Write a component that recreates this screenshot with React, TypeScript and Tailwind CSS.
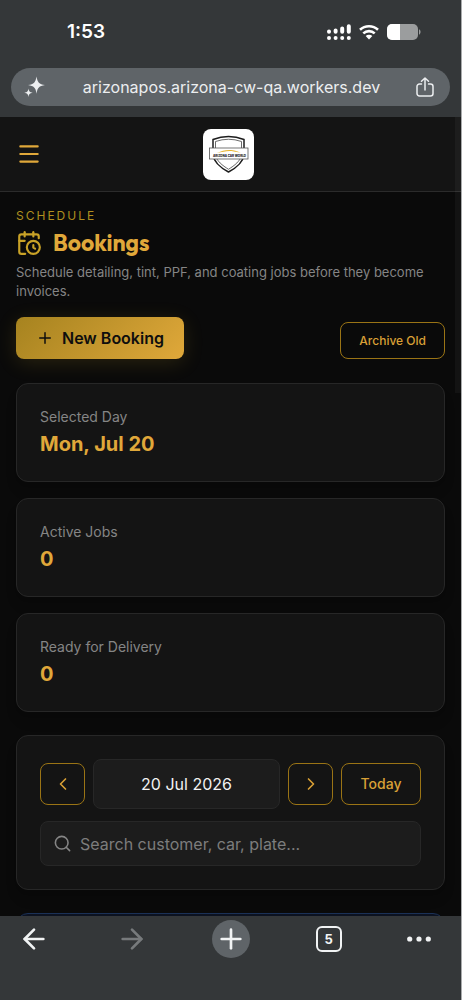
import React, { useState } from 'react'
import {
  ArrowLeft,
  ArrowRight,
  CalendarClock,
  ChevronLeft,
  ChevronRight,
  Menu,
  Plus,
  Search
} from 'lucide-react'

interface StatCardProps {
  label: string
  value: string | number
}

const goldOutline = 'border border-[#9a7415] text-[#d9a036] rounded-lg hover:bg-[#d9a036]/10'

function StatusBar() {
  return (
    <div className="flex items-center justify-between h-16 pl-[67px] pr-10 text-white">
      <span className="text-[19px] leading-6 font-semibold">1:53</span>
      <div className="flex items-center gap-2">
        <svg className="w-6 h-4" viewBox="0 0 24 16" fill="none" stroke="currentColor" strokeWidth="4" strokeLinecap="round">
          <path d="M2 7.6v.2M8.6 6.4v1.4M15.2 4.4v3.4M21.8 2.2v5.6" />
          <path d="M2 14v0M8.6 14v0M15.2 14v0M21.8 14v0" />
        </svg>
        <svg className="w-5 h-4" viewBox="0 0 20 16" fill="none" stroke="currentColor" strokeWidth="2.6">
          <path d="M1 5.8a13 13 0 0 1 18 0" />
          <path d="M4.3 9.4a8.3 8.3 0 0 1 11.4 0" />
          <path d="M10 15.4 6.7 12.1a4.7 4.7 0 0 1 6.6 0z" fill="currentColor" stroke="none" />
        </svg>
        <svg className="w-[34px] h-4" viewBox="0 0 34 16">
          <rect width="31" height="16" rx="5" fill="#9b9d9e" />
          <path d="M5 0h8v16H5a5 5 0 0 1-5-5V5a5 5 0 0 1 5-5z" fill="#fff" />
          <path d="M32 5.3c2 .9 2 4.5 0 5.4z" fill="#9b9d9e" />
        </svg>
      </div>
    </div>
  )
}

function AddressBar() {
  return (
    <div className="px-[11px] pt-1">
      <div className="flex items-center justify-between h-[38px] pl-3 pr-4 rounded-full bg-[#5f6468] text-[#eceef0]">
        <button aria-label="Assistant">
          <svg className="w-6 h-6" viewBox="0 0 24 24" fill="currentColor">
            <path d="M13.5 1.5c1 6 2.5 7.6 8.500 8.600-6 1-7.500 2.600-8.500 8.600-1-6-2.500-7.600-8.500-8.600 6-1 7.500-2.600 8.500-8.600z" />
            <path d="M5.500 13.500c.5 3 1.200 3.700 4.200 4.200-3 .5-3.700 1.200-4.200 4.200-.5-3-1.200-3.700-4.200-4.200 3-.5 3.700-1.200 4.200-4.200z" />
          </svg>
        </button>
        <span className="text-base leading-6">arizonapos.arizona-cw-qa.workers.dev</span>
        <button aria-label="Share">
          <svg className="w-[18px] h-5" viewBox="0 0 18 20" fill="none" stroke="currentColor" strokeWidth="1.5" strokeLinecap="round" strokeLinejoin="round">
            <path d="M5.500 7H3.500A2.500 2.500 0 0 0 1 9.500v7A2.500 2.500 0 0 0 3.500 19h11a2.500 2.500 0 0 0 2.500-2.500v-7A2.500 2.500 0 0 0 14.500 7h-2" />
            <path d="M9 13V1M5.500 4.300 9 1l3.500 3.300" />
          </svg>
        </button>
      </div>
    </div>
  )
}

function Logo() {
  return (
    <svg className="w-[51px] h-[51px] rounded-lg bg-white" viewBox="0 0 51 51" role="img" aria-label="Arizona Car World">
      <path d="M10 10.5Q25.500 4.500 41 10.500V26c-1 7-8 13-15.500 17C18 39 11 33 10 26z" fill="#fff" stroke="#1d1d1d" strokeWidth="1.5" />
      <path d="M12.500 12.500q13-4.500 26 0V26c-1 6-7 10.500-13 14.300-6-3.800-12-8.300-13-14.300z" fill="none" stroke="#444" strokeWidth=".8" />
      <rect x="6.500" y="19" width="38.500" height="11" fill="#fff" stroke="#555" strokeWidth=".8" />
      <path d="M14 24c5-2 8-3.300 14-3 5 .3 6 2 11 2.700-6-.4-8-1.700-12-1.700-5 0-8 1-13 2z" fill="#e9b42c" />
      <text x="26.500" y="27.500" textAnchor="middle" fontSize="3" fontWeight="800" fill="#222">ARIZONA CAR WORLD</text>
    </svg>
  )
}

function StatCard({ label, value }: StatCardProps) {
  return (
    <div className="bg-[#141414] border border-[#272727] rounded-xl px-[23px] py-[21px] shadow-lg">
      <p className="text-sm leading-6 text-[#858585]">{label}</p>
      <p className="text-xl leading-[31px] font-bold text-[#e0a83a]">{value}</p>
    </div>
  )
}

function BrowserToolbar() {
  return (
    <nav className="flex justify-between h-[84px] pt-1 pl-[15px] pr-[31px] bg-[#343739] text-[#f1f3f4] shrink-0">
      <button aria-label="Back" className="flex items-center justify-center size-[38px]">
        <ArrowLeft className="w-8 h-8" strokeWidth={2} />
      </button>
      <button aria-label="Forward" className="flex items-center justify-center size-[38px] text-[#777a7c]">
        <ArrowRight className="w-8 h-8" strokeWidth={2} />
      </button>
      <button aria-label="New tab" className="flex items-center justify-center size-[38px] rounded-full bg-[#5f6468]">
        <Plus className="w-8 h-8" strokeWidth={2} />
      </button>
      <button aria-label="Show tabs" className="flex items-center justify-center size-[38px]">
        <span className="flex items-center justify-center size-[26px] border-2 border-current rounded-md text-[13px] leading-4 font-bold">5</span>
      </button>
      <button aria-label="More" className="flex items-center justify-center w-[22px] h-[38px]">
        <svg className="w-6 h-6 shrink-0" viewBox="0 0 24 24" fill="currentColor">
          <circle cx="2.700" cy="12" r="2.600" />
          <circle cx="12" cy="12" r="2.600" />
          <circle cx="21.300" cy="12" r="2.600" />
        </svg>
      </button>
    </nav>
  )
}

export default function App() {
  const [query, setQuery] = useState('')
  const [day, setDay] = useState(new Date(2026, 6, 20))

  const moveDay = (amount: number) => {
    setDay(new Date(day.getFullYear(), day.getMonth(), day.getDate() + amount))
  }

  const selectedDay = day.toLocaleDateString('en-US', { weekday: 'short', month: 'short', day: 'numeric' })
  const pickerDay = day.toLocaleDateString('en-GB', { day: 'numeric', month: 'short', year: 'numeric' })

  return (
    <div className="flex flex-col h-screen overflow-hidden bg-[#0a0a0a] border-r border-[#a9abac] font-['Inter',sans-serif]">
      <div className="h-[117px] bg-[#343739] shrink-0">
        <StatusBar />
        <AddressBar />
      </div>

      <div className="relative flex-1 min-h-0 overflow-hidden">
        {/* App header */}
        <header className="grid grid-cols-3 items-center h-[75px] pl-4 pr-5 bg-[#141414] border-b border-[#2b2b2b]">
          <button aria-label="Open menu" className="justify-self-start text-[#e0a83a]">
            <Menu className="w-[26px] h-[26px]" strokeWidth={2} />
          </button>
          <div className="justify-self-center">
            <Logo />
          </div>
        </header>

        <main className="px-4 pt-4">
          {/* Page title */}
          <p className="text-xs leading-4 tracking-[2px] text-[#b08f1f]">SCHEDULE</p>
          <h1 className="flex items-center gap-[11px] mt-[3px] text-[23px] leading-8 font-bold font-['Outfit','Lato',sans-serif] text-[#e0a83a]">
            <CalendarClock className="w-[26px] h-[26px] text-[#c9a227]" strokeWidth={2} />
            Bookings
          </h1>
          <p className="mt-1 text-[13px] leading-[19px] text-[#858585]">
            Schedule detailing, tint, PPF, and coating jobs before they become invoices.
          </p>

          <div className="flex items-end justify-between mt-4">
            <button className="flex items-center gap-2 h-[42px] px-5 rounded-lg bg-linear-135 from-[#a6831f] to-[#e0a83a] text-[#0e0e0e] text-base font-semibold shadow-[0_4px_20px_rgba(201,162,39,0.16)]">
              <Plus className="w-[18px] h-[18px]" strokeWidth={2} />
              <span>New Booking</span>
            </button>
            <button className={`h-[37px] px-[18px] text-xs font-medium ${goldOutline}`}>Archive Old</button>
          </div>

          {/* Summary */}
          <div className="flex flex-col gap-4 mt-6">
            <StatCard label="Selected Day" value={selectedDay} />
            <StatCard label="Active Jobs" value={0} />
            <StatCard label="Ready for Delivery" value={0} />
          </div>

          {/* Day picker and search */}
          <section className="mt-[23px] p-[23px] bg-[#141414] border border-[#272727] rounded-xl shadow-lg">
            <div className="flex items-center gap-2">
              <button
                onClick={() => moveDay(-1)}
                aria-label="Previous day"
                className={`flex items-center justify-center w-[45px] h-[42px] ${goldOutline}`}
              >
                <ChevronLeft className="w-5 h-5" />
              </button>
              <button className="flex-1 h-[50px] rounded-lg bg-[#1c1c1c] border border-[#272727] text-base text-[#f2f2f2]">
                {pickerDay}
              </button>
              <button
                onClick={() => moveDay(1)}
                aria-label="Next day"
                className={`flex items-center justify-center w-[45px] h-[42px] ${goldOutline}`}
              >
                <ChevronRight className="w-5 h-5" />
              </button>
              <button
                onClick={() => setDay(new Date(2026, 6, 20))}
                className={`w-20 h-[42px] text-sm font-medium ${goldOutline}`}
              >
                Today
              </button>
            </div>
            <label className="flex items-center gap-2 h-[45px] mt-3 px-3 rounded-lg bg-[#1c1c1c] border border-[#272727]">
              <Search className="w-[19px] h-[19px] text-[#858585] shrink-0" strokeWidth={2} />
              <input
                type="text"
                aria-label="Search bookings"
                value={query}
                onChange={(e) => setQuery(e.target.value)}
                placeholder="Search customer, car, plate..."
                className="flex-1 min-w-0 bg-transparent text-base text-[#f2f2f2] placeholder:text-[#7d7d7d] focus:outline-none"
              />
            </label>
          </section>

          {/* Booking list */}
          <section className="h-40 mt-[23px] bg-[#0c1220] border border-[#1b3157] rounded-xl" />
        </main>

        {/* Scroll thumb */}
        <div className="absolute top-0 right-0 w-1.5 h-[276px] bg-white/4" />
      </div>

      <BrowserToolbar />
    </div>
  )
}
